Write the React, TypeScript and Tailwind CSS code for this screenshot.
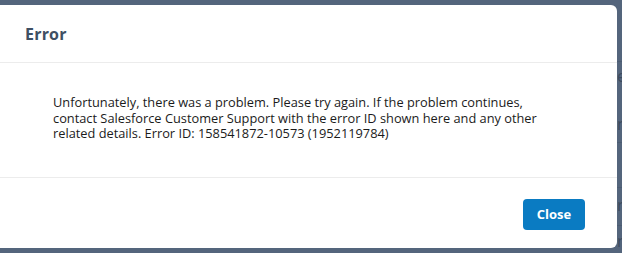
export default function App() {
  return (
    <div
      className="w-[622px] h-[253px] overflow-hidden bg-[#54657c] pt-[5px] flex"
      style={{ fontFamily: '"Open Sans", "Liberation Sans", sans-serif' }}
    >
      <div className="w-[617px] h-[243px] shrink-0 bg-white rounded-r-[6px] flex flex-col">
        <div className="h-[58px] flex items-center pl-[25px] border-b border-[#ececec]">
          <h2 className="text-[16px] font-bold text-[#3e4f63] tracking-[0.2px]">Error</h2>
        </div>
        <div className="h-[115px] pl-[53px] pr-[50px] pt-[32px] border-b border-[#ececec]">
          <p className="text-[12.8px] leading-[15.5px] text-[#1b1b1b]">
            Unfortunately, there was a problem. Please try again. If the problem continues,
            contact Salesforce Customer Support with the error ID shown here and any other
            related details. Error ID: 158541872-10573 (1952119784)
          </p>
        </div>
        <div className="flex-1 flex items-start justify-end pr-[32px] pt-[21px]">
          <button className="w-[62px] h-[31px] rounded-[4px] bg-[#0a7bc2] text-white text-[13px] font-bold">
            Close
          </button>
        </div>
      </div>

      {/* the page behind the overlay, peeking out on the right */}
      <div className="flex-1 flex flex-col overflow-hidden text-[16px] leading-none text-[#3d4b5e] whitespace-nowrap">
        <div className="h-[57px] border-b border-[#4c5c72]" />
        <div className="h-[40px] pt-[6px]">e</div>
        <div className="h-[41px] border-b border-[#4c5c72] pt-[14px]">n</div>
        <div className="h-[45px] border-b border-[#4c5c72]" />
        <div className="h-[38px] border-b border-[#4c5c72] pt-[9px]">r</div>
        <div className="pt-[7px]">n</div>
      </div>
    </div>
  );
}
